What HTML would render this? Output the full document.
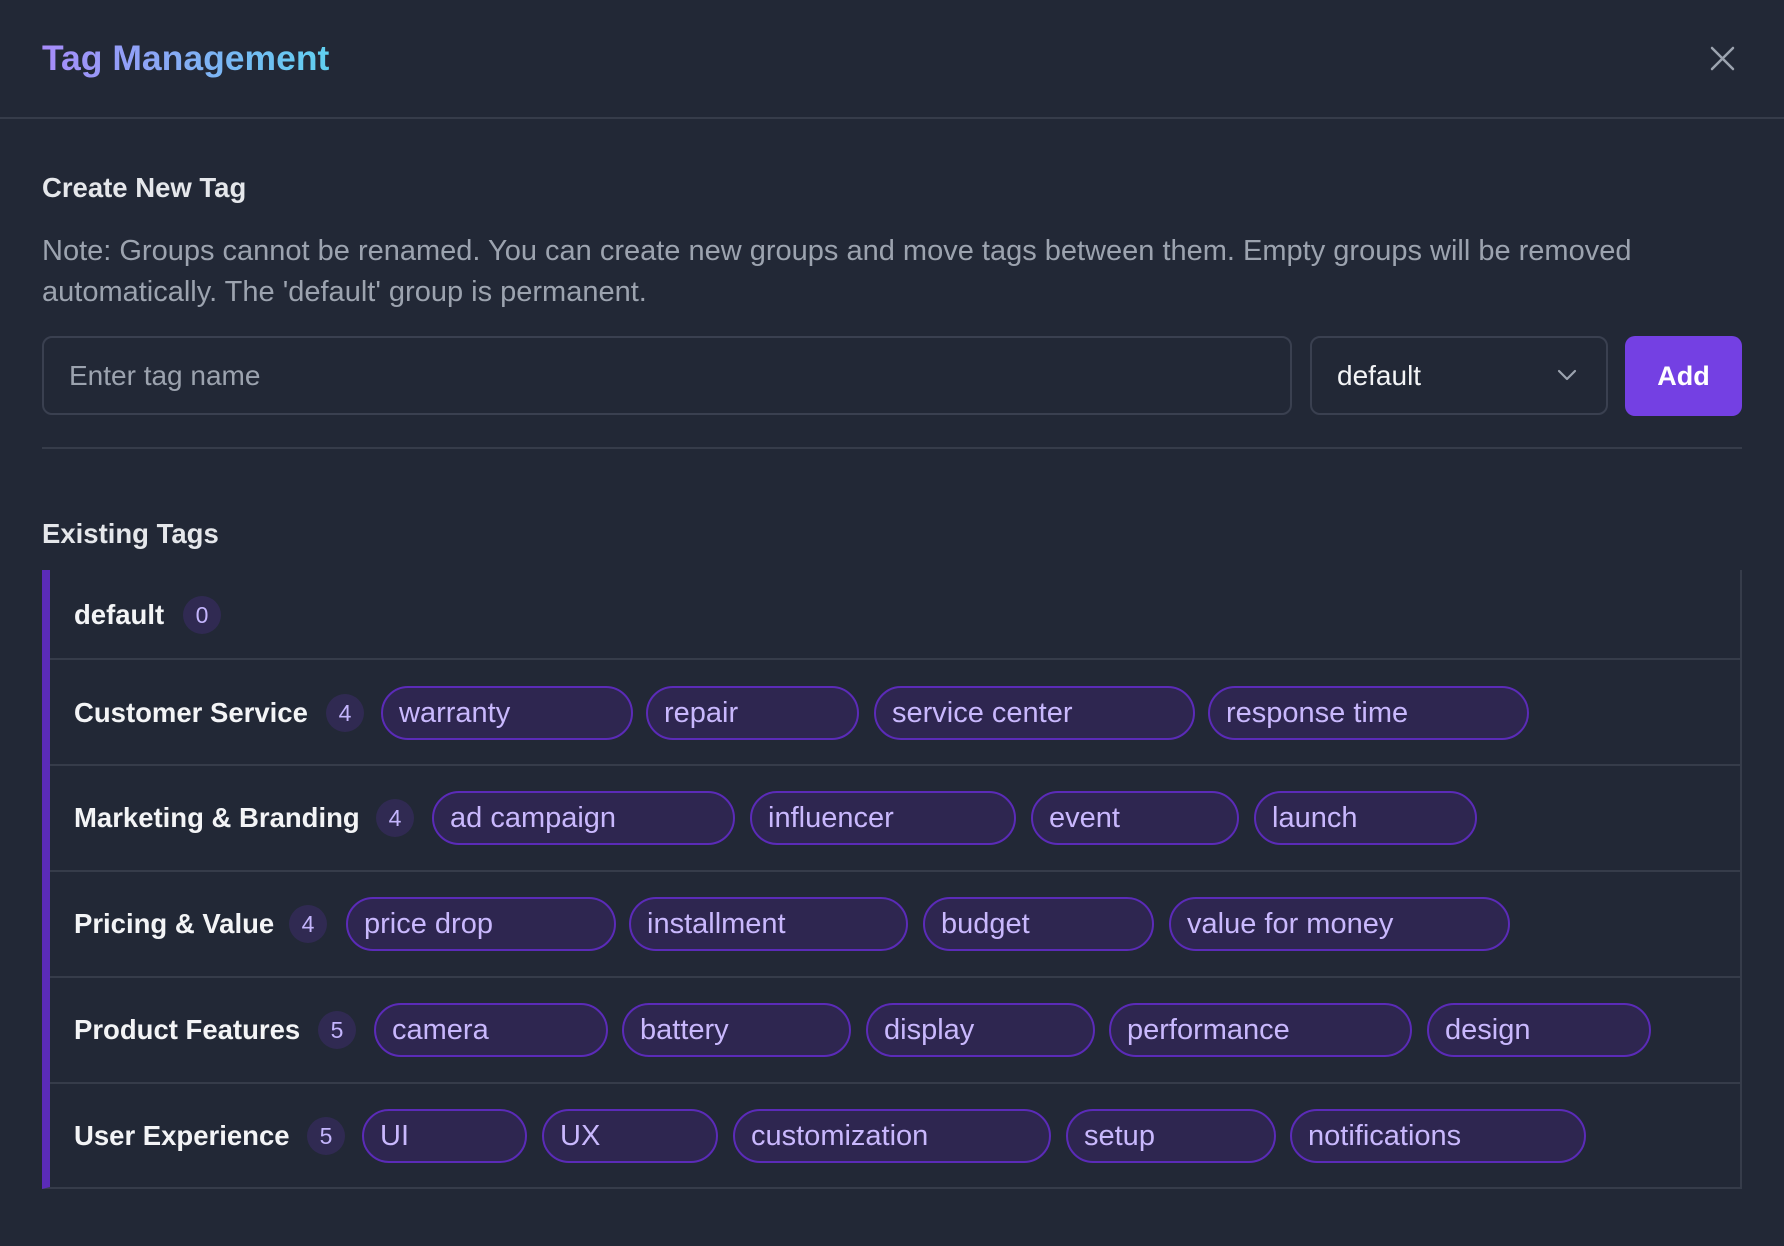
<!DOCTYPE html>
<html><head><meta charset="utf-8"><style>
*{box-sizing:border-box;margin:0;padding:0}
body{width:1784px;height:1246px;background:#222836;font-family:"Liberation Sans",sans-serif;position:relative;overflow:hidden;color:#e5e7eb}
.abs{position:absolute}
.title{left:42px;top:36px;font-size:35.5px;font-weight:bold;background:linear-gradient(90deg,#a78bfa,#60d0f0);-webkit-background-clip:text;background-clip:text;color:transparent;line-height:44px}
.hline{left:0;top:117px;width:1784px;height:2px;background:#363c4a}
.h2{font-size:27.5px;font-weight:bold;color:#e5e7eb;line-height:30px}
.note{left:42px;top:231px;width:1700px;font-size:29px;line-height:41px;color:#9ca3af}
.input{left:42px;top:336px;width:1250px;height:79px;border:2px solid #3a4050;border-radius:10px;font-size:28px;color:#9ca3af;padding-left:25px;line-height:75px}
.select{left:1310px;top:336px;width:298px;height:79px;border:2px solid #3a4050;border-radius:10px;font-size:28px;color:#f3f4f6;padding-left:25px;line-height:75px}
.add{left:1625px;top:336px;width:117px;height:80px;background:#7440e3;border-radius:10px;font-size:27px;font-weight:bold;color:#fff;text-align:center;line-height:80px}
.div2{left:42px;top:447px;width:1700px;height:2px;background:#363c4a}
.list{left:42px;top:570px;width:1700px;height:619px;border-left:8px solid #5b2bb8;border-right:2px solid #363c4a;border-bottom:2px solid #363c4a}
.row{position:absolute;left:0;width:1690px;border-top:2px solid #363c4a}
.lbl{position:absolute;left:24px;font-size:27.5px;font-weight:bold;color:#f3f4f6;top:50%;transform:translateY(-50%)}
.badge{position:absolute;width:38px;height:38px;border-radius:50%;background:#302a52;color:#c4b5fd;font-size:23px;text-align:center;line-height:38px;top:50%;transform:translateY(-50%)}
.tag{position:absolute;height:54px;border:2px solid #5b2bb8;background:#2e2650;border-radius:27px;color:#c9b8fd;font-size:29px;line-height:50px;padding-left:16px;top:50%;transform:translateY(-50%)}
</style></head><body>
<div class="abs title">Tag Management</div>
<svg class="abs" style="left:1710px;top:46px" width="25" height="25" viewBox="0 0 25 25"><path d="M2 2L23 23M23 2L2 23" stroke="#9ca3af" stroke-width="2.5" stroke-linecap="round"/></svg>
<div class="abs hline"></div>
<div class="abs h2" style="left:42px;top:173px">Create New Tag</div>
<div class="abs note">Note: Groups cannot be renamed. You can create new groups and move tags between them. Empty groups will be removed automatically. The 'default' group is permanent.</div>
<div class="abs input">Enter tag name</div>
<div class="abs select">default</div>
<svg class="abs" style="left:1557px;top:369px" width="20" height="12" viewBox="0 0 20 12"><path d="M2 2L10 10L18 2" stroke="#9ca3af" stroke-width="2.2" fill="none" stroke-linecap="round" stroke-linejoin="round"/></svg>
<div class="abs add">Add</div>
<div class="abs div2"></div>
<div class="abs h2" style="left:42px;top:519px">Existing Tags</div>
<div class="abs list">
<div class="row" style="top:0;height:89px;border-top:none"><div class="lbl">default</div><div class="badge" style="left:133px">0</div></div>
<div class="row" style="top:88px;height:107px"><div class="lbl">Customer Service</div><div class="badge" style="left:276px">4</div>
<div class="tag" style="left:331px;width:252px">warranty</div><div class="tag" style="left:596px;width:213px">repair</div><div class="tag" style="left:824px;width:321px">service center</div><div class="tag" style="left:1158px;width:321px">response time</div></div>
<div class="row" style="top:194px;height:106px"><div class="lbl">Marketing &amp; Branding</div><div class="badge" style="left:326px">4</div>
<div class="tag" style="left:382px;width:303px">ad campaign</div><div class="tag" style="left:700px;width:266px">influencer</div><div class="tag" style="left:981px;width:208px">event</div><div class="tag" style="left:1204px;width:223px">launch</div></div>
<div class="row" style="top:300px;height:106px"><div class="lbl">Pricing &amp; Value</div><div class="badge" style="left:239px">4</div>
<div class="tag" style="left:296px;width:270px">price drop</div><div class="tag" style="left:579px;width:279px">installment</div><div class="tag" style="left:873px;width:231px">budget</div><div class="tag" style="left:1119px;width:341px">value for money</div></div>
<div class="row" style="top:406px;height:106px"><div class="lbl">Product Features</div><div class="badge" style="left:268px">5</div>
<div class="tag" style="left:324px;width:234px">camera</div><div class="tag" style="left:572px;width:229px">battery</div><div class="tag" style="left:816px;width:229px">display</div><div class="tag" style="left:1059px;width:303px">performance</div><div class="tag" style="left:1377px;width:224px">design</div></div>
<div class="row" style="top:512px;height:106px"><div class="lbl">User Experience</div><div class="badge" style="left:257px">5</div>
<div class="tag" style="left:312px;width:165px">UI</div><div class="tag" style="left:492px;width:176px">UX</div><div class="tag" style="left:683px;width:318px">customization</div><div class="tag" style="left:1016px;width:210px">setup</div><div class="tag" style="left:1240px;width:296px">notifications</div></div>
</div>
</body></html>
